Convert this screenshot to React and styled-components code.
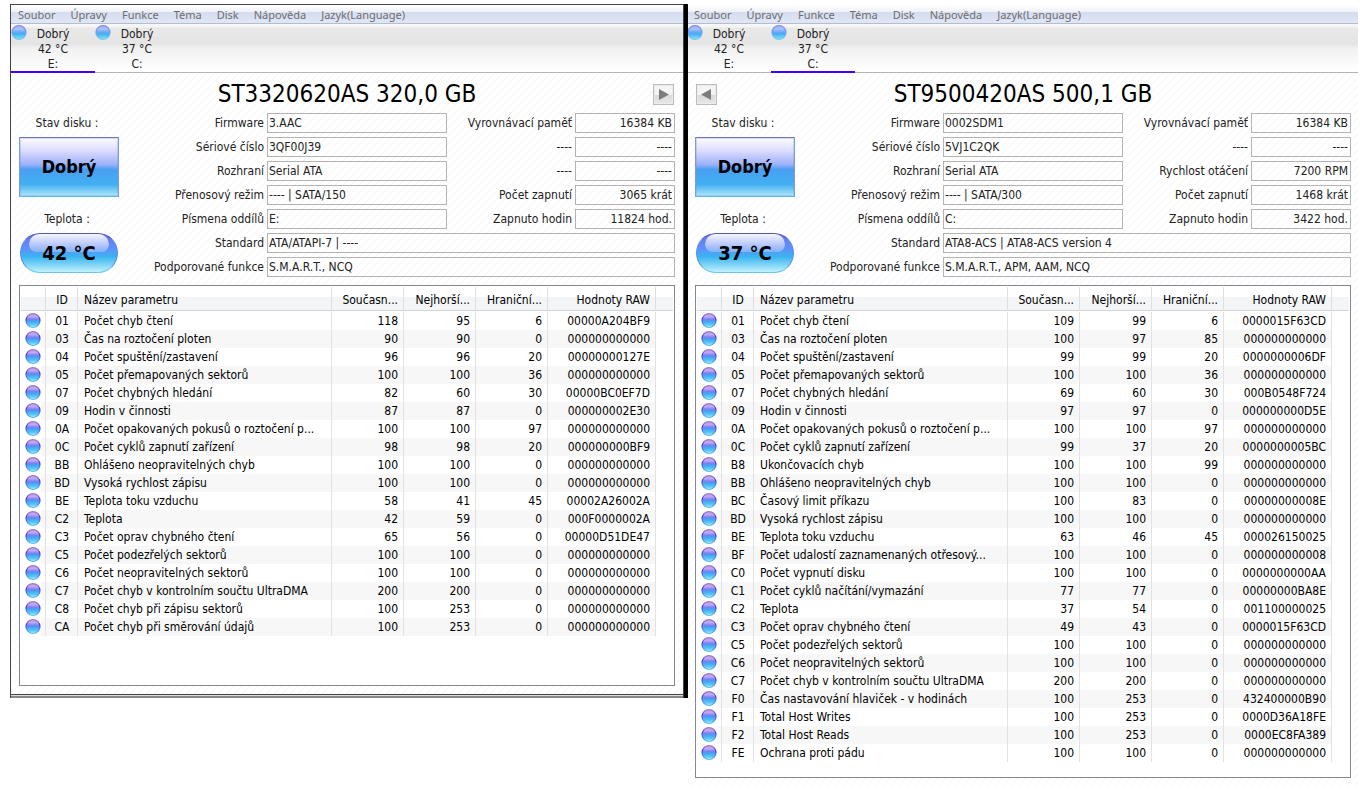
import React from 'react'
import styled, { createGlobalStyle } from 'styled-components'

const GlobalStyle = createGlobalStyle`
* { box-sizing: border-box; }
body {
  margin: 0;
  background: #fff;
  color: #000;
  font-family: "DejaVu Sans Condensed", "Noto Sans", sans-serif;
  font-size: 12px;
}
`

const Page = styled.main`
  display: grid;
  grid-template-columns: minmax(0, 674fr) 4px minmax(0, 670fr);
  align-items: start;
  padding: 4px 9px 8px 10px;
`
const Divider = styled.div`
  height: 694px;
  background: #000;
`
const Window = styled.section`
  overflow: hidden;
  background: linear-gradient(135deg, transparent 46%, #f4f4f4 46% 54%, transparent 54%) 0 0 / 8px 8px;
  border-style: solid;
  border-color: #444;
  border-width: ${(p) => (p.$framed ? '1px 1px 0 1px' : '0')};
  padding-top: ${(p) => (p.$framed ? '0' : '1px')};
`
const WindowInner = styled.div`
  margin-left: ${(p) => (p.$framed ? '0' : '-1px')};
`
const BottomEdge = styled.div`
  height: 4px;
  border-top: 1px solid #444;
  background: linear-gradient(#ddd 0 1px, #888 1px);
`

const MenuBar = styled.nav`
  display: flex;
  align-items: center;
  gap: 15px;
  height: 19px;
  padding: 2px 7px 0;
  border-bottom: 1px solid #b5bcd0;
  background: linear-gradient(#fff 0, #eef1f9 7px, #d4dcee 7px, #e0e7f5 18px);
`
const MenuItem = styled.button`
  padding: 0;
  border: 0;
  background: none;
  color: #6d6d6d;
  font: 11px/16px "Noto Sans", sans-serif;
`

const DiskBar = styled.div`
  display: flex;
  height: 49px;
  background: linear-gradient(#f8f8f8 0, #f3f3f3 3px, #e9e9e9 4px, #e4e4e4 20px, #f1f1f1 24px, #fff 47px);
  box-shadow: inset 0 -1px #b4b4b4;
`
const DiskTab = styled.button`
  display: flex;
  align-items: flex-start;
  width: 84px;
  padding: 0;
  border: 0;
  box-shadow: ${(p) => (p.$active ? 'inset 0 -2px #4000ff' : 'none')};
  background: none;
  color: #222;
  font: inherit;
  line-height: 15px;
`
const DiskTabText = styled.span`
  width: 52px;
  padding-top: 3px;
  text-align: center;
`

const Body = styled.div`
  padding: 5px ${(p) => (p.$framed ? 8 : 7)}px 8px 8px;
`
const TitleRow = styled.header`
  display: grid;
  grid-template-columns: 22px 1fr 22px;
  align-items: center;
  height: 32px;
`
const Title = styled.h1`
  grid-column: 2;
  margin: 0;
  font-size: 24px;
  line-height: 32px;
  font-weight: 400;
  text-align: center;
`
const ArrowButton = styled.button`
  grid-row: 1;
  grid-column: ${(p) => (p.$prev ? 1 : 3)};
  justify-self: ${(p) => (p.$prev ? 'end' : 'start')};
  display: flex;
  align-items: center;
  justify-content: center;
  width: 21px;
  height: 21px;
  padding: 0;
  border: 1px solid #bbb;
  box-shadow: inset 0 0 0 1px #ececec;
  background: linear-gradient(#f4f4f4 50%, #d8d8d8 50%, #e8e8e8);
`

const Info = styled.div`
  display: grid;
  grid-template-columns: 100px minmax(0, 1fr);
  margin-top: 3px;
`
const Status = styled.div`
  display: flex;
  flex-direction: column;
`
const StatusLabel = styled.div`
  height: 20px;
  padding-right: 4px;
  line-height: 20px;
  color: #222;
  text-align: center;
`
const Health = styled.button`
  height: 60px;
  margin: 4px 0 12px;
  padding: 0;
  border: 1px solid;
  border-color: #7076c0 #7c9cdc #5cb8ec #7c9cdc;
  box-shadow: inset 0 0 0 1px rgba(120, 140, 230, 0.3);
  background: linear-gradient(#fdfcff 0, #dcdcfd 22%, #9cb0fa 46%, #4a9ff2 54%, #41aff2 80%, #b0e8fa);
  font: bold 18px/58px "DejaVu Sans Condensed", "Noto Sans", sans-serif;
`
const Temperature = styled.button`
  position: relative;
  height: 40px;
  margin: 4px 1px 0;
  padding: 0;
  border: 1px solid;
  border-color: #5058b8 #5a90e0 #6cc8ee;
  border-radius: 20px;
  background: linear-gradient(#6a74f0, #5f90fa 38%, #3ab4f0 60%, #c0f2fc);
  font: bold 20px/38px "DejaVu Sans Condensed", "Noto Sans", sans-serif;
  &::before {
    content: "";
    position: absolute;
    inset: 0 8px auto;
    height: 18px;
    border-radius: 14px 14px 10px 10px;
    background: linear-gradient(rgba(255, 255, 255, 0.95), rgba(255, 255, 255, 0.25));
  }
`
const TemperatureText = styled.span`
  position: relative;
`

const Fields = styled.div`
  display: grid;
  grid-template-columns: 148px 180px minmax(0, 1fr) 100px;
  row-gap: 4px;
`
const FieldLabel = styled.label`
  padding-right: 3px;
  line-height: 20px;
  color: #222;
  text-align: right;
  white-space: nowrap;
`
const FieldBox = styled.input`
  width: 100%;
  height: 20px;
  padding: 0 2px 0 1px;
  border: 1px solid #b4b4b4;
  border-radius: 0;
  background: transparent;
  color: #222;
  font: inherit;
  text-align: ${(p) => (p.$right ? 'right' : 'left')};
  grid-column: ${(p) => (p.$wide ? 'span 3' : 'auto')};
`

const ListBox = styled.div`
  min-height: ${(p) => (p.$framed ? 401 : 0)}px;
  margin-top: 8px;
  padding: 1px 1px ${(p) => (p.$framed ? 1 : 15)}px;
  border: 1px solid #828790;
  background: #fff;
`
const Table = styled.table`
  width: 100%;
  table-layout: fixed;
  border-collapse: separate;
  border-spacing: 0;
`
const Th = styled.th`
  height: 24px;
  padding: 2px 5px 0 6px;
  border-right: 1px solid #dedfe1;
  border-bottom: 1px solid #d5d5d5;
  background: linear-gradient(#fff 45%, #f4f5f7 45%);
  font-weight: 400;
  text-align: ${(p) => p.$align || 'left'};
  white-space: nowrap;
  &:last-child { border-right: 0; }
`
const Td = styled.td`
  height: 18px;
  padding: 0 5px 0 6px;
  border-right: 1px solid #e2e2e2;
  line-height: 18px;
  text-align: ${(p) => p.$align || 'left'};
  white-space: nowrap;
  overflow: hidden;
  text-overflow: ellipsis;
  background: ${(p) => (p.$odd ? '#f7f7f7' : 'transparent')};
  &:last-child { border-right: 0; background: none; }
`
const BallCell = styled(Td)`
  padding: 0 0 0 4px;
  vertical-align: top;
  background: ${(p) => (p.$odd ? 'linear-gradient(90deg, transparent 20px, #f7f7f7 20px)' : 'none')};
`
const Spacer = styled.tr`
  height: 1px;
`

const Ball = styled.svg`
  display: block;
  flex: none;
`

const BallDefs = () => (
  <Ball width="0" height="0" aria-hidden="true">
    <defs>
      <linearGradient id="ballDark" x1="0" y1="0" x2="0" y2="1">
        <stop offset="0" stopColor="#b58ae0" />
        <stop offset="0.2" stopColor="#c4acf2" />
        <stop offset="0.42" stopColor="#7a80f2" />
        <stop offset="0.55" stopColor="#3fa4f4" />
        <stop offset="0.8" stopColor="#5cc8f6" />
        <stop offset="1" stopColor="#b4f4fe" />
      </linearGradient>
      <linearGradient id="ballDarkEdge" x1="0" y1="0" x2="0" y2="1">
        <stop offset="0" stopColor="#a27cc8" />
        <stop offset="0.4" stopColor="#4a3cc8" />
        <stop offset="1" stopColor="#5cc0ec" />
      </linearGradient>
      <linearGradient id="ballLight" x1="0" y1="0" x2="0" y2="1">
        <stop offset="0" stopColor="#a4b0f4" />
        <stop offset="0.25" stopColor="#a9c0fc" />
        <stop offset="0.5" stopColor="#62a6fa" />
        <stop offset="0.6" stopColor="#3fb0f2" />
        <stop offset="1" stopColor="#8ce4fa" />
      </linearGradient>
      <linearGradient id="ballLightEdge" x1="0" y1="0" x2="0" y2="1">
        <stop offset="0" stopColor="#7888dc" />
        <stop offset="0.5" stopColor="#6aa0ee" />
        <stop offset="1" stopColor="#7cc8ee" />
      </linearGradient>
    </defs>
  </Ball>
)

const BallIcon = ({ kind }) => (
  <Ball width="16" height="17" viewBox="0 0 16 17" aria-hidden="true">
    <circle cx="8" cy="8.500" r="7" fill={`url(#${kind})`} stroke={`url(#${kind}Edge)`} strokeWidth="1.200" />
  </Ball>
)

const Arrow = ({ prev }) => (
  <svg width="11" height="11" viewBox="0 0 11 11" aria-hidden="true">
    <path d={prev ? 'M10 0v11L0 5.500z' : 'M1 0v11L11 5.500z'} fill="#7c7c7c" />
  </svg>
)

const menu = ['Soubor', 'Úpravy', 'Funkce', 'Téma', 'Disk', 'Nápověda', 'Jazyk(Language)']

const disks = [
  { letter: 'E:', temp: '42 °C' },
  { letter: 'C:', temp: '37 °C' },
]

const first = {
  title: 'ST3320620AS 320,0 GB',
  temp: '42 °C',
  active: 0,
  fields: [
    ['Firmware', '3.AAC', 'Vyrovnávací paměť', '16384 KB'],
    ['Sériové číslo', '3QF00J39', '----', '----'],
    ['Rozhraní', 'Serial ATA', '----', '----'],
    ['Přenosový režim', '---- | SATA/150', 'Počet zapnutí', '3065 krát'],
    ['Písmena oddílů', 'E:', 'Zapnuto hodin', '11824 hod.'],
  ],
  wide: [
    ['Standard', 'ATA/ATAPI-7 | ----'],
    ['Podporované funkce', 'S.M.A.R.T., NCQ'],
  ],
  rows: [
    ['01', 'Počet chyb čtení', 118, 95, 6, '00000A204BF9'],
    ['03', 'Čas na roztočení ploten', 90, 90, 0, '000000000000'],
    ['04', 'Počet spuštění/zastavení', 96, 96, 20, '00000000127E'],
    ['05', 'Počet přemapovaných sektorů', 100, 100, 36, '000000000000'],
    ['07', 'Počet chybných hledání', 82, 60, 30, '00000BC0EF7D'],
    ['09', 'Hodin v činnosti', 87, 87, 0, '000000002E30'],
    ['0A', 'Počet opakovaných pokusů o roztočení p...', 100, 100, 97, '000000000000'],
    ['0C', 'Počet cyklů zapnutí zařízení', 98, 98, 20, '000000000BF9'],
    ['BB', 'Ohlášeno neopravitelných chyb', 100, 100, 0, '000000000000'],
    ['BD', 'Vysoká rychlost zápisu', 100, 100, 0, '000000000000'],
    ['BE', 'Teplota toku vzduchu', 58, 41, 45, '00002A26002A'],
    ['C2', 'Teplota', 42, 59, 0, '000F0000002A'],
    ['C3', 'Počet oprav chybného čtení', 65, 56, 0, '00000D51DE47'],
    ['C5', 'Počet podezřelých sektorů', 100, 100, 0, '000000000000'],
    ['C6', 'Počet neopravitelných sektorů', 100, 100, 0, '000000000000'],
    ['C7', 'Počet chyb v kontrolním součtu UltraDMA', 200, 200, 0, '000000000000'],
    ['C8', 'Počet chyb při zápisu sektorů', 100, 253, 0, '000000000000'],
    ['CA', 'Počet chyb při směrování údajů', 100, 253, 0, '000000000000'],
  ],
}

const second = {
  title: 'ST9500420AS 500,1 GB',
  temp: '37 °C',
  active: 1,
  fields: [
    ['Firmware', '0002SDM1', 'Vyrovnávací paměť', '16384 KB'],
    ['Sériové číslo', '5VJ1C2QK', '----', '----'],
    ['Rozhraní', 'Serial ATA', 'Rychlost otáčení', '7200 RPM'],
    ['Přenosový režim', '---- | SATA/300', 'Počet zapnutí', '1468 krát'],
    ['Písmena oddílů', 'C:', 'Zapnuto hodin', '3422 hod.'],
  ],
  wide: [
    ['Standard', 'ATA8-ACS | ATA8-ACS version 4'],
    ['Podporované funkce', 'S.M.A.R.T., APM, AAM, NCQ'],
  ],
  rows: [
    ['01', 'Počet chyb čtení', 109, 99, 6, '0000015F63CD'],
    ['03', 'Čas na roztočení ploten', 100, 97, 85, '000000000000'],
    ['04', 'Počet spuštění/zastavení', 99, 99, 20, '0000000006DF'],
    ['05', 'Počet přemapovaných sektorů', 100, 100, 36, '000000000000'],
    ['07', 'Počet chybných hledání', 69, 60, 30, '000B0548F724'],
    ['09', 'Hodin v činnosti', 97, 97, 0, '000000000D5E'],
    ['0A', 'Počet opakovaných pokusů o roztočení p...', 100, 100, 97, '000000000000'],
    ['0C', 'Počet cyklů zapnutí zařízení', 99, 37, 20, '0000000005BC'],
    ['B8', 'Ukončovacích chyb', 100, 100, 99, '000000000000'],
    ['BB', 'Ohlášeno neopravitelných chyb', 100, 100, 0, '000000000000'],
    ['BC', 'Časový limit příkazu', 100, 83, 0, '00000000008E'],
    ['BD', 'Vysoká rychlost zápisu', 100, 100, 0, '000000000000'],
    ['BE', 'Teplota toku vzduchu', 63, 46, 45, '000026150025'],
    ['BF', 'Počet udalostí zaznamenaných otřesový...', 100, 100, 0, '000000000008'],
    ['C0', 'Počet vypnutí disku', 100, 100, 0, '0000000000AA'],
    ['C1', 'Počet cyklů načítání/vymazání', 77, 77, 0, '00000000BA8E'],
    ['C2', 'Teplota', 37, 54, 0, '001100000025'],
    ['C3', 'Počet oprav chybného čtení', 49, 43, 0, '0000015F63CD'],
    ['C5', 'Počet podezřelých sektorů', 100, 100, 0, '000000000000'],
    ['C6', 'Počet neopravitelných sektorů', 100, 100, 0, '000000000000'],
    ['C7', 'Počet chyb v kontrolním součtu UltraDMA', 200, 200, 0, '000000000000'],
    ['F0', 'Čas nastavování hlaviček - v hodinách', 100, 253, 0, '432400000B90'],
    ['F1', 'Total Host Writes', 100, 253, 0, '0000D36A18FE'],
    ['F2', 'Total Host Reads', 100, 253, 0, '0000EC8FA389'],
    ['FE', 'Ochrana proti pádu', 100, 100, 0, '000000000000'],
  ],
}

const Col = styled.col`
  width: ${(p) => (p.$w ? `${p.$w}px` : 'auto')};
`

const SmartTable = ({ rows }) => (
  <Table>
    <colgroup>
      <Col $w={25} />
      <Col $w={32} />
      <Col />
      <Col $w={72} />
      <Col $w={72} />
      <Col $w={72} />
      <Col $w={108} />
      <Col $w={17} />
    </colgroup>
    <thead>
      <tr>
        <Th />
        <Th $align="center">ID</Th>
        <Th>Název parametru</Th>
        <Th $align="right">Současn...</Th>
        <Th $align="right">Nejhorší...</Th>
        <Th $align="right">Hraniční...</Th>
        <Th $align="right">Hodnoty RAW</Th>
        <Th />
      </tr>
    </thead>
    <tbody>
      <Spacer />
      {rows.map((row, i) => (
        <tr key={row[0]}>
          <BallCell $odd={i % 2 === 1}><BallIcon kind="ballDark" /></BallCell>
          <Td $odd={i % 2 === 1} $align="center">{row[0]}</Td>
          <Td $odd={i % 2 === 1}>{row[1]}</Td>
          <Td $odd={i % 2 === 1} $align="right">{row[2]}</Td>
          <Td $odd={i % 2 === 1} $align="right">{row[3]}</Td>
          <Td $odd={i % 2 === 1} $align="right">{row[4]}</Td>
          <Td $odd={i % 2 === 1} $align="right">{row[5]}</Td>
          <Td />
        </tr>
      ))}
    </tbody>
  </Table>
)

const DiskWindow = ({ id, data, framed }) => (
  <Window $framed={framed}>
    <WindowInner $framed={framed}>
      <MenuBar>
        {menu.map((item) => <MenuItem key={item}>{item}</MenuItem>)}
      </MenuBar>
      <DiskBar>
        {disks.map((disk, i) => (
          <DiskTab key={disk.letter} $active={i === data.active}>
            <BallIcon kind="ballLight" />
            <DiskTabText>
              Dobrý<br />{disk.temp}<br />{disk.letter}
            </DiskTabText>
          </DiskTab>
        ))}
      </DiskBar>
      <Body $framed={framed}>
        <TitleRow>
          <Title>{data.title}</Title>
          <ArrowButton $prev={!framed} aria-label={framed ? 'Další disk' : 'Předchozí disk'}>
            <Arrow prev={!framed} />
          </ArrowButton>
        </TitleRow>
        <Info>
          <Status>
            <StatusLabel>Stav disku :</StatusLabel>
            <Health>Dobrý</Health>
            <StatusLabel>Teplota :</StatusLabel>
            <Temperature><TemperatureText>{data.temp}</TemperatureText></Temperature>
          </Status>
          <Fields>
            {data.fields.map(([label, value, label2, value2], i) => (
              <React.Fragment key={label}>
                <FieldLabel htmlFor={`${id}-a${i}`}>{label}</FieldLabel>
                <FieldBox id={`${id}-a${i}`} readOnly value={value} />
                <FieldLabel htmlFor={`${id}-b${i}`}>{label2}</FieldLabel>
                <FieldBox id={`${id}-b${i}`} readOnly $right value={value2} />
              </React.Fragment>
            ))}
            {data.wide.map(([label, value], i) => (
              <React.Fragment key={label}>
                <FieldLabel htmlFor={`${id}-w${i}`}>{label}</FieldLabel>
                <FieldBox id={`${id}-w${i}`} readOnly $wide value={value} />
              </React.Fragment>
            ))}
          </Fields>
        </Info>
        <ListBox $framed={framed}>
          <SmartTable rows={data.rows} />
        </ListBox>
      </Body>
      {framed && <BottomEdge />}
    </WindowInner>
  </Window>
)

export default function App() {
  return (
    <>
      <GlobalStyle />
      <BallDefs />
      <Page>
        <DiskWindow id="first" data={first} framed />
        <Divider />
        <DiskWindow id="second" data={second} />
      </Page>
    </>
  )
}
